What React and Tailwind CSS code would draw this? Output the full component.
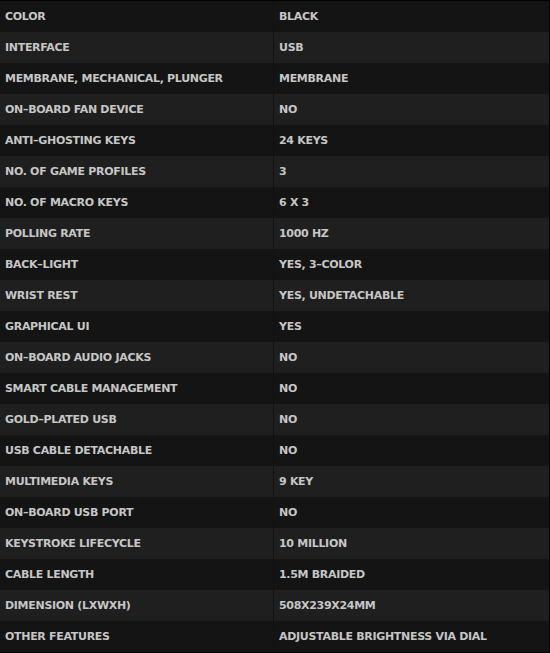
const specs = [
  ['COLOR', 'BLACK'],
  ['INTERFACE', 'USB'],
  ['MEMBRANE, MECHANICAL, PLUNGER', 'MEMBRANE'],
  ['ON–BOARD FAN DEVICE', 'NO'],
  ['ANTI–GHOSTING KEYS', '24 KEYS'],
  ['NO. OF GAME PROFILES', '3'],
  ['NO. OF MACRO KEYS', '6 X 3'],
  ['POLLING RATE', '1000 HZ'],
  ['BACK–LIGHT', 'YES, 3–COLOR'],
  ['WRIST REST', 'YES, UNDETACHABLE'],
  ['GRAPHICAL UI', 'YES'],
  ['ON–BOARD AUDIO JACKS', 'NO'],
  ['SMART CABLE MANAGEMENT', 'NO'],
  ['GOLD–PLATED USB', 'NO'],
  ['USB CABLE DETACHABLE', 'NO'],
  ['MULTIMEDIA KEYS', '9 KEY'],
  ['ON–BOARD USB PORT', 'NO'],
  ['KEYSTROKE LIFECYCLE', '10 MILLION'],
  ['CABLE LENGTH', '1.5M BRAIDED'],
  ['DIMENSION (LXWXH)', '508X239X24MM'],
  ['OTHER FEATURES', 'ADJUSTABLE BRIGHTNESS VIA DIAL'],
];

export default function App() {
  return (
    <div className="w-[550px] h-[653px] bg-black pt-px pr-px font-['DejaVu_Sans',sans-serif] font-bold text-[11px] tracking-[-0.3px] text-[#c6c6c6]">
      {specs.map(([label, value], i) => (
        <div
          key={label}
          className={`flex h-[31px] items-center ${i % 2 === 0 ? 'bg-[#141414]' : 'bg-[#1f1f1f]'}`}
        >
          <div className="w-[273px] pl-[5px] pt-[2px] whitespace-nowrap">{label}</div>
          <div className="flex h-full flex-1 items-center border-l border-[#111111] pl-[5px] pt-[2px] whitespace-nowrap">{value}</div>
        </div>
      ))}
    </div>
  );
}
